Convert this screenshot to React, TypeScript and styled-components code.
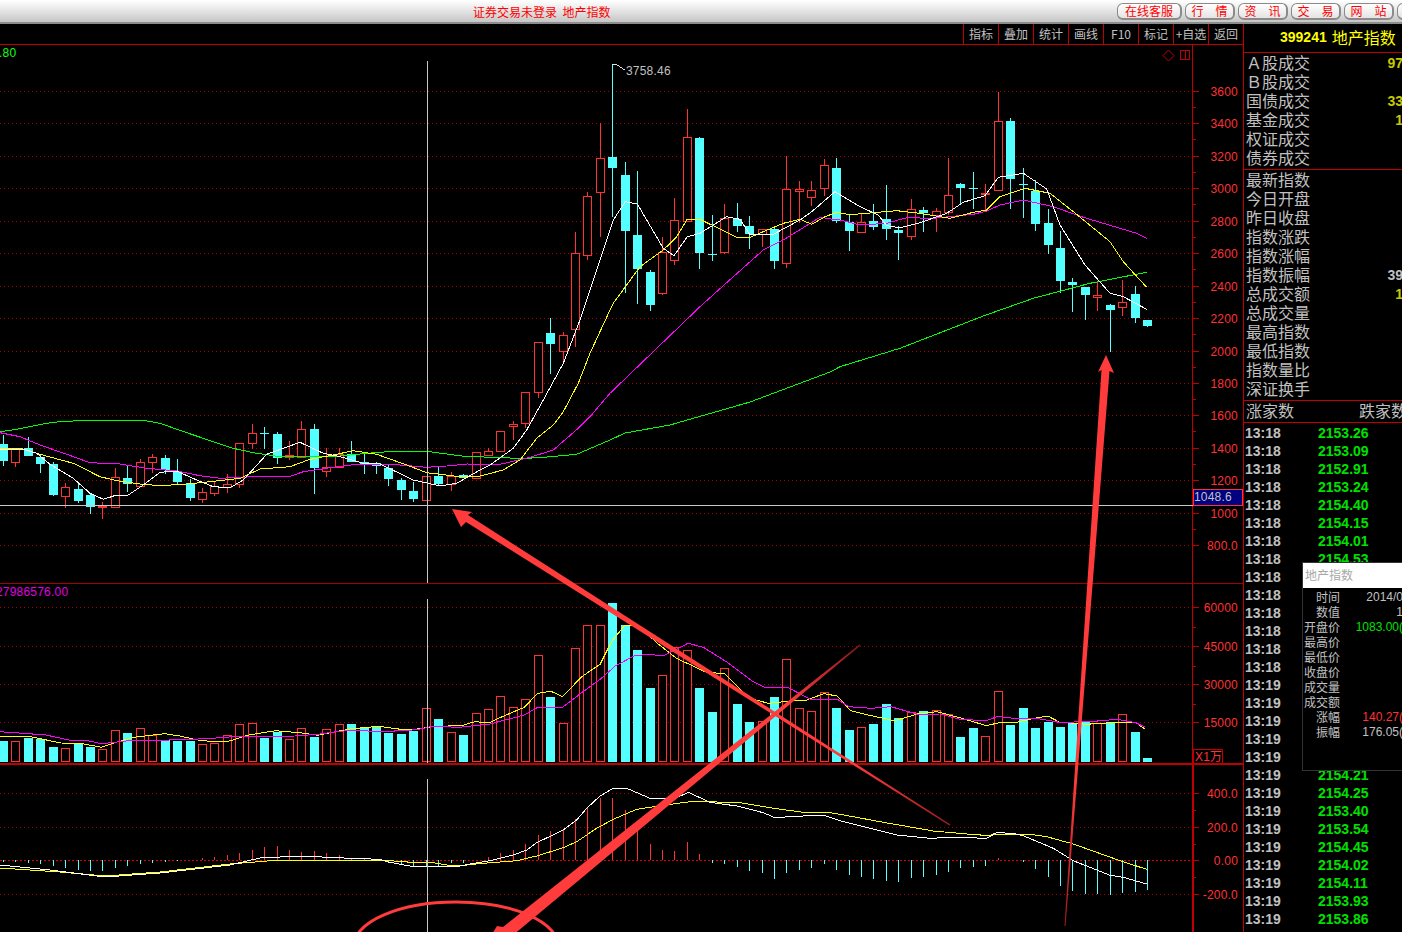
import React from 'react';
import styled, { createGlobalStyle } from 'styled-components';

const RED = '#ff3232';
const CYAN = '#54ffff';
const AXIS = '#c00000';
const ARROW = '#ff3b3b';
const SANS = '"Liberation Sans", "Noto Sans CJK SC", sans-serif';
const CJK = '"Noto Sans CJK SC", "Liberation Sans", sans-serif';

const GlobalStyle = createGlobalStyle`
  html, body {
    margin: 0;
    padding: 0;
    background: #000;
    overflow: hidden;
  }
`;

const Frame = styled.div`
  position: relative;
  width: 1402px;
  height: 932px;
  overflow: hidden;
  display: flex;
  flex-direction: column;
  background: #000;
`;

const TitleBar = styled.header`
  height: 22px;
  display: flex;
  align-items: center;
  padding-left: 473px;
  background: linear-gradient(#ffffff, #f2f2f2 25%, #c6c6c6);
  border-bottom: 2px solid #8c8c8c;
`;

const TitleText = styled.div`
  width: 644px;
  flex: none;
  font: 12px ${CJK};
  color: #ff0000;
  white-space: pre;
`;

const NavGroup = styled.nav`
  display: flex;
  gap: 3px;
  flex: none;
`;

const NavButton = styled.div`
  width: 65px;
  height: 17px;
  box-sizing: border-box;
  flex: none;
  display: flex;
  align-items: center;
  justify-content: center;
  border: 1px solid #8a8a8a;
  border-right-width: 2px;
  border-bottom-width: 2px;
  border-radius: 6px;
  background: linear-gradient(#ffffff, #e4e4e4);
  font: 12px ${CJK};
  color: #ff0000;
  white-space: pre;

  &:not(:first-child) {
    width: 50px;
  }
`;

const Workspace = styled.main`
  flex: 1;
  min-height: 0;
  display: flex;
`;

const ChartColumn = styled.section`
  width: 1243px;
  flex: none;
  display: flex;
  flex-direction: column;
`;

const Toolbar = styled.div`
  height: 20px;
  display: flex;
  justify-content: flex-end;
  border-bottom: 1px solid ${AXIS};
`;

const ToolCell = styled.div`
  width: 35px;
  box-sizing: border-box;
  padding-bottom: 2px;
  border-left: 1px solid ${AXIS};
  display: flex;
  align-items: center;
  justify-content: center;
  font: 12px ${CJK};
  color: #c0c0c0;
  white-space: nowrap;
`;

const ChartSvg = styled.svg`
  display: block;
  width: 1243px;
  flex: none;
`;

const AxisLabel = styled.text`
  font: 12px ${SANS};
  letter-spacing: 0.2px;
  fill: ${RED};
  text-anchor: end;
`;

const ChartNote = styled.text<{ $color: string }>`
  font: 12px ${SANS};
  letter-spacing: 0.2px;
  fill: ${(p) => p.$color};
`;

const SidePanel = styled.aside`
  position: relative;
  flex: 1;
  min-width: 0;
  overflow: hidden;
  border-left: 1px solid ${AXIS};
`;

const CodeHeader = styled.div`
  height: 29px;
  box-sizing: border-box;
  padding: 0 0 3px 36px;
  border-bottom: 1px solid ${AXIS};
  display: flex;
  align-items: center;
  gap: 5px;
  color: #ffff00;
`;

const CodeNumber = styled.span`
  font: bold 14px ${SANS};
`;

const CodeName = styled.span`
  font: 16px ${CJK};
`;

const StatGroup = styled.div`
  padding: 0 0 2px 2px;
  border-bottom: 1px solid ${AXIS};
`;

const StatRow = styled.div`
  height: 19px;
  display: flex;
  justify-content: space-between;
  align-items: center;
`;

const StatLabel = styled.span`
  font: 16px/19px ${CJK};
  color: #c0c0c0;
  white-space: nowrap;
`;

const StatValue = styled.span<{ $muted?: boolean }>`
  font: bold 14px ${SANS};
  color: ${(p) => (p.$muted ? '#c0c0c0' : '#c8c800')};
  margin-right: -1px;
`;

const BreadthRow = styled.div`
  height: 22px;
  box-sizing: border-box;
  display: flex;
  justify-content: space-between;
  align-items: center;
  padding: 0 0 2px 2px;
  margin-right: -5px;
  border-bottom: 1px solid ${AXIS};
`;

const TickList = styled.div`
  padding: 1px 0 0 1px;
`;

const TickRow = styled.div`
  height: 18px;
  display: flex;
  align-items: center;
  font: bold 14px ${SANS};
`;

const TickTime = styled.span`
  width: 73px;
  color: #c0c0c0;
`;

const TickPrice = styled.span`
  color: #00e000;
`;

const InfoCard = styled.div`
  position: absolute;
  top: 538px;
  left: 58px;
  width: 100px;
  height: 207px;
  background: #000;
  border: 1px solid #333;
  border-right: 0;
`;

const InfoTitle = styled.div`
  height: 25px;
  box-sizing: border-box;
  padding: 0 0 2px 2px;
  background: #fff;
  display: flex;
  align-items: center;
  font: 12px ${CJK};
  color: #a8a8a8;
  margin-bottom: 1px;
`;

const InfoRow = styled.div`
  height: 15px;
  display: flex;
  align-items: center;
  justify-content: space-between;
`;

const InfoLabel = styled.span`
  width: 37px;
  text-align: right;
  font: 12px ${CJK};
  color: #c0c0c0;
`;

const InfoValue = styled.span<{ $color?: string }>`
  font: 12px ${SANS};
  color: ${(p) => p.$color ?? '#c0c0c0'};
`;

const AnnotationLayer = styled.svg`
  position: absolute;
  inset: 0;
  width: 1402px;
  height: 932px;
  pointer-events: none;
`;

// [high, bodyTop, bodyBottom, low, red] in page pixels, read off the chart
const CANDLES: number[][] = [
  [435, 444, 461, 466, 0], [448, 448, 462, 467, 1], [437, 448, 456, 456, 0], [455, 457, 464, 473, 0],
  [462, 464, 495, 496, 0], [483, 487, 496, 508, 1], [484, 489, 501, 503, 0], [493, 495, 507, 514, 0],
  [502, 506, 507, 519, 1], [468, 477, 507, 508, 1], [466, 478, 484, 492, 0], [459, 462, 486, 486, 1],
  [454, 457, 462, 473, 1], [455, 458, 470, 474, 0], [459, 472, 482, 485, 0], [479, 483, 498, 501, 0],
  [488, 492, 499, 503, 1], [482, 486, 493, 496, 1], [474, 484, 487, 493, 1], [443, 443, 484, 488, 1],
  [424, 433, 443, 449, 1], [427, 433, 434, 449, 0], [432, 434, 458, 464, 0], [441, 455, 457, 460, 1],
  [421, 429, 457, 457, 1], [424, 429, 468, 494, 0], [448, 467, 471, 477, 1], [448, 454, 467, 467, 1],
  [441, 454, 462, 462, 0], [453, 462, 464, 474, 0], [462, 463, 466, 474, 0], [465, 468, 479, 486, 0],
  [478, 480, 490, 500, 0], [482, 491, 499, 502, 0], [476, 476, 500, 501, 1], [467, 476, 484, 486, 0],
  [472, 476, 484, 491, 1], [474, 475, 478, 478, 0], [452, 452, 478, 478, 1], [448, 451, 455, 455, 1],
  [431, 431, 451, 451, 1], [421, 424, 426, 440, 1], [392, 392, 423, 428, 1], [342, 342, 392, 398, 1],
  [318, 333, 344, 374, 0], [332, 335, 351, 364, 1], [232, 253, 329, 347, 1], [192, 196, 255, 260, 1],
  [123, 158, 192, 237, 1], [64, 157, 168, 217, 0], [162, 175, 231, 293, 0], [171, 235, 269, 304, 0],
  [270, 272, 305, 311, 0], [237, 252, 293, 295, 1], [198, 220, 260, 265, 1], [109, 137, 221, 221, 1],
  [137, 138, 253, 269, 0], [215, 254, 255, 261, 0], [204, 218, 252, 254, 1], [203, 219, 226, 232, 0],
  [216, 226, 234, 249, 0], [229, 229, 234, 247, 1], [228, 229, 261, 269, 0], [156, 189, 263, 268, 1],
  [181, 189, 191, 223, 1], [181, 190, 197, 206, 1], [159, 165, 188, 196, 1], [158, 168, 221, 223, 0],
  [215, 222, 231, 251, 0], [213, 222, 232, 233, 1], [204, 221, 227, 230, 0], [185, 219, 229, 240, 0],
  [226, 230, 233, 260, 0], [199, 209, 236, 240, 1], [207, 210, 213, 232, 0], [208, 211, 215, 232, 1],
  [158, 195, 212, 215, 1], [183, 184, 188, 204, 0], [172, 188, 189, 209, 0], [184, 193, 193, 210, 1],
  [92, 121, 190, 190, 1], [118, 121, 179, 209, 0], [168, 184, 185, 218, 0], [180, 191, 224, 231, 0],
  [209, 223, 245, 254, 0], [231, 248, 281, 293, 0], [278, 282, 285, 312, 0], [287, 287, 295, 320, 0],
  [282, 295, 297, 311, 1], [304, 305, 310, 352, 0], [280, 302, 307, 316, 1], [286, 294, 318, 323, 0],
  [320, 320, 326, 327, 0],
];

const VOLUME_TOPS = [
  741, 741, 738, 739, 747, 748, 743, 747, 749, 730, 733, 728, 735, 740, 741, 741, 744, 743, 735, 724,
  723, 738, 732, 739, 728, 737, 729, 724, 724, 727, 727, 733, 734, 731, 708, 719, 732, 735, 713, 709,
  696, 707, 699, 655, 697, 723, 648, 625, 625, 603, 625, 650, 688, 675, 647, 650, 688, 712, 668, 704,
  722, 721, 697, 659, 708, 711, 692, 708, 730, 727, 724, 704, 718, 712, 711, 710, 714, 737, 728, 736,
  691, 725, 708, 728, 722, 727, 723, 722, 723, 723, 714, 732, 758,
];

const MACD_TIPS = [
  862, 862, 863, 864, 866, 868, 870, 871, 871, 868, 866, 864, 863, 862, 861, 860, 858, 857, 855, 853,
  850, 847, 846, 850, 852, 851, 853, 855, 858, 858, 859, 863, 865, 867, 867, 866, 863, 863, 860, 857,
  853, 850, 844, 835, 831, 829, 819, 807, 798, 798, 810, 827, 844, 850, 851, 842, 854, 863, 864, 867,
  871, 873, 879, 873, 870, 868, 864, 870, 875, 877, 879, 881, 882, 878, 877, 875, 872, 868, 867, 866,
  858, 860, 862, 869, 877, 886, 891, 894, 894, 895, 893, 892, 890,
];

const barX = (i: number) => Math.round(3 + i * 12.435);

// line points were measured on magnified crops, so each run keeps its own origin
const fromCrop = (ox: number, oy: number, sx: number, raw: string) =>
  raw
    .split(' ')
    .map((p) => {
      const [x, y] = p.split(',').map(Number);
      return `${(ox + x / sx).toFixed(1)},${(oy + y / 3).toFixed(1)}`;
    })
    .join(' ');

const PRICE_LINES = [
  {
    color: '#00ff00',
    points: [
      fromCrop(0, 410, 3, '0,65 50,58 140,40 190,34 290,31 430,31 480,40 560,68 640,95 700,115 760,128 840,140 1000,140 1100,130 1180,124 1280,124 1400,140 1500,142'),
      fromCrop(490, 220, 3, '90,716 160,712 260,703 290,690 360,660'),
      '625,433 670,425 750,402 830,372',
      fromCrop(840, 80, 3, '0,860 180,805 430,708 580,655 750,610 920,577'),
    ],
  },
  {
    color: '#ff00ff',
    points: [
      fromCrop(0, 410, 3, '0,68 60,80 120,105 200,133 270,158 360,162 440,175 530,183 600,197 660,205 760,200 870,199 910,185 1000,172 1070,163 1200,165 1280,172 1340,168 1400,162 1500,163'),
      fromCrop(490, 220, 3, '120,712 190,690 270,620 300,590 360,520'),
      fromCrop(500, 60, 3, '600,740 700,650 790,570 850,540 960,472 1000,478'),
      fromCrop(840, 80, 3, '0,420 60,435 140,430 200,413 280,415 400,403 440,393 480,375 550,360 640,380 730,412 890,460 920,475'),
    ],
  },
  {
    color: '#ffff00',
    points: [
      fromCrop(0, 410, 3, '0,115 70,117 120,133 220,160 300,200 350,212 420,222 480,227 560,222 630,215 720,205 780,177 870,170 930,148 1000,135 1060,122 1130,133 1220,165 1280,188 1380,200 1440,198'),
      fromCrop(490, 220, 3, '40,750 90,720 140,655 190,615 220,575 265,490 300,400 360,270'),
      fromCrop(500, 60, 3, '340,730 420,620 490,570 530,530 560,480 600,478 710,532 750,532 850,490 900,478 935,493 975,470 1010,457'),
      fromCrop(840, 80, 3, '30,404 170,392 240,400 330,415 400,397 440,390 480,350 555,325 630,340 700,395 810,485 850,545 920,622'),
    ],
  },
  {
    color: '#ffffff',
    points: [
      fromCrop(0, 410, 3, '0,118 70,118 110,130 150,163 220,205 270,250 310,268 350,255 385,255 430,225 480,187 530,183 590,210 640,230 690,233 730,210 800,133 900,97 970,130 1020,140 1090,160 1140,162 1240,210 1320,228 1370,220 1440,180'),
      fromCrop(490, 220, 3, '0,735 70,685 110,630 160,540 220,430 270,300 300,210'),
      fromCrop(500, 60, 3, '340,480 376,425 412,432 490,565 522,587 562,530 600,520 680,470 720,478 750,525 820,523 900,480 935,455 1005,395'),
      fromCrop(840, 80, 3, '60,380 115,405 140,437 180,443 240,428 320,400 370,367 435,347 475,292 550,280 620,327 660,435 735,555 810,640 850,650 920,688'),
    ],
  },
];

const VOLUME_LINES = [
  {
    color: '#ffff00',
    points: [
      fromCrop(0, 580, 2.613, '0,468 50,470 80,470 130,482 160,489 210,490 265,502 300,488 350,472 400,465 430,461 470,468 520,481 560,485 600,483 650,465 720,452 790,459 830,466 890,452 920,446 990,439 1060,450 1090,447 1130,440 1210,436 1240,425 1280,428 1300,416 1370,382 1405,340 1440,334 1470,350 1520,290 1568,253'),
      fromCrop(600, 590, 2.613, '30,155 65,105 100,107 150,160 200,205 280,248 325,250 390,325 440,340 490,334 540,330 585,311 620,318 655,362 700,375 770,392 830,372 880,365 940,383 1010,407 1050,396 1080,399 1130,386 1170,378 1200,396 1270,403 1350,397 1400,398 1425,418'),
    ],
  },
  {
    color: '#ff00ff',
    points: [
      fromCrop(0, 580, 2.613, '0,455 60,460 120,465 180,480 230,482 265,491 330,483 420,481 540,476 610,470 680,470 770,468 830,463 880,455 920,451 1000,455 1090,449 1130,439 1200,442 1280,432 1370,405 1405,382 1470,382 1520,338 1568,298'),
      fromCrop(600, 590, 2.613, '40,228 90,197 130,193 165,198 230,160 270,172 330,215 400,275 430,292 490,292 550,328 620,328 650,350 710,355 760,350 830,373 890,372 940,388 1010,392 1040,379 1080,385 1140,385 1200,397 1280,395 1350,388 1400,398 1425,412'),
    ],
  },
];

const MACD_LINES = [
  {
    color: '#ffff00',
    points: [
      '0,868 60,872 105,876 160,872 230,864 280,860',
      fromCrop(350, 770, 3, '0,270 120,272 200,278 250,278 290,285 350,285 400,280 500,272 560,258 640,233 680,215 740,175 790,148 860,118 930,107 1030,94 1170,98 1270,115 1370,128 1440,128'),
      fromCrop(840, 770, 3, '0,133 130,157 280,183 380,192 450,197 460,192 570,193 620,200 700,222 840,272 920,298'),
    ],
  },
  {
    color: '#ffffff',
    points: [
      '0,865 50,870 105,877 160,873 230,865 260,858 300,856',
      fromCrop(350, 770, 3, '0,265 90,268 110,275 190,290 250,290 320,290 360,282 420,272 490,255 530,240 560,218 640,180 680,150 710,115 750,78 790,55 830,55 900,85 970,88 1015,67 1080,97 1160,108 1240,128 1275,143 1320,140 1420,135'),
      fromCrop(840, 770, 3, '0,152 90,175 170,195 270,205 345,202 440,205 470,188 520,190 550,197 640,235 700,272 810,316 850,322 920,342'),
    ],
  },
];

const TICK_ROWS: [string, string][] = [
  ['13:18', '2153.26'], ['13:18', '2153.09'], ['13:18', '2152.91'], ['13:18', '2153.24'],
  ['13:18', '2154.40'], ['13:18', '2154.15'], ['13:18', '2154.01'], ['13:18', '2154.53'],
  ['13:18', ''], ['13:18', ''], ['13:18', ''], ['13:18', ''], ['13:18', ''], ['13:18', ''],
  ['13:19', ''], ['13:19', ''], ['13:19', ''], ['13:19', ''], ['13:19', ''],
  ['13:19', '2154.21'], ['13:19', '2154.25'], ['13:19', '2153.40'], ['13:19', '2153.54'],
  ['13:19', '2154.45'], ['13:19', '2154.02'], ['13:19', '2154.11'], ['13:19', '2153.93'], ['13:19', '2153.86'],
];

const INFO_ROWS: { label: string; value: string; color?: string }[] = [
  { label: '时间', value: '2014/0' },
  { label: '数值', value: '1' },
  { label: '开盘价', value: '1083.00(', color: '#00e000' },
  { label: '最高价', value: '' },
  { label: '最低价', value: '' },
  { label: '收盘价', value: '' },
  { label: '成交量', value: '' },
  { label: '成交额', value: '' },
  { label: '涨幅', value: '140.27(', color: RED },
  { label: '振幅', value: '176.05(' },
];

const NAV_ITEMS = ['在线客服', '行　情', '资　讯', '交　易', '网　站', ''];
const TOOLS = ['指标', '叠加', '统计', '画线', 'F10', '标记', '+自选', '返回'];

const STATS_A: [string, string?][] = [
  ['Ａ股成交', '97'], ['Ｂ股成交'], ['国债成交', '33'], ['基金成交', '1'], ['权证成交'], ['债券成交'],
];
const STATS_B: [string, string?, boolean?][] = [
  ['最新指数'], ['今日开盘'], ['昨日收盘'], ['指数涨跌'], ['指数涨幅'], ['指数振幅', '39', true],
  ['总成交额', '1'], ['总成交量'], ['最高指数'], ['最低指数'], ['指数量比'], ['深证换手'],
];

function Scale({ ticks }: { ticks: [number, string][] }) {
  const step = ticks[1][0] - ticks[0][0];
  return (
    <>
      {ticks.map(([y, label], i) => (
        <g key={label}>
          <line
            x1="0"
            x2="1193"
            y1={y + 0.5}
            y2={y + 0.5}
            stroke={label === '0.00' ? '#e00000' : '#a80000'}
            strokeDasharray={label === '0.00' ? '2 2' : '1 3'}
            shapeRendering="geometricPrecision"
          />
          <line x1="1193" x2="1199" y1={y + 0.5} y2={y + 0.5} stroke={AXIS} />
          {i < ticks.length - 1 && (
            <line x1="1193" x2="1196" y1={Math.round(y + step / 2) + 0.5} y2={Math.round(y + step / 2) + 0.5} stroke={AXIS} />
          )}
          <AxisLabel x="1238" y={y + 5}>{label}</AxisLabel>
        </g>
      ))}
    </>
  );
}

function Lines({ lines }: { lines: { color: string; points: string[] }[] }) {
  return (
    <>
      {lines.map((l) => (
        <polyline key={l.color} points={l.points.join(' ')} fill="none" stroke={l.color} strokeWidth="1" />
      ))}
    </>
  );
}

function Candle({ index, data }: { index: number; data: number[] }) {
  const [high, top, bottom, low, red] = data;
  const x = barX(index);
  const color = red ? RED : CYAN;
  if (red) {
    return (
      <g stroke={color}>
        <line x1={x + 0.5} x2={x + 0.5} y1={high} y2={top} />
        <line x1={x + 0.5} x2={x + 0.5} y1={bottom} y2={low} />
        <rect x={x - 3.5} y={top + 0.5} width="8" height={Math.max(bottom - top, 1)} fill="#000" />
      </g>
    );
  }
  return (
    <g>
      <line x1={x + 0.5} x2={x + 0.5} y1={high} y2={low} stroke={color} />
      <rect x={x - 4} y={top} width="9" height={Math.max(bottom - top, 1)} fill={color} />
    </g>
  );
}

function PricePane() {
  const ticks: [number, string][] = [
    [91, '3600'], [123, '3400'], [156, '3200'], [188, '3000'], [221, '2800'], [253, '2600'], [286, '2400'], [318, '2200'],
    [351, '2000'], [383, '1800'], [415, '1600'], [448, '1400'], [480, '1200'], [513, '1000'], [545, '800.0'],
  ];
  return (
    <ChartSvg viewBox="0 45 1243 539" height="539" shapeRendering="crispEdges">
      <Scale ticks={ticks} />
      {CANDLES.map((c, i) => (
        <Candle key={i} index={i} data={c} />
      ))}
      <Lines lines={PRICE_LINES} />
      <line x1="1192.5" x2="1192.5" y1="45" y2="584" stroke={AXIS} />
      <line x1="0" x2="1243" y1="583.5" y2="583.5" stroke="#a00000" />
      <ChartNote $color="#10ff10" x="-1" y="57">.80</ChartNote>
      <polyline points="612,65 616,64 620,67 625,70" fill="none" stroke="#e0e0e0" />
      <ChartNote $color="#c0c0c0" x="626" y="75">3758.46</ChartNote>
      <path d="M1168.5 50 L1174 55.5 L1168.5 61 L1163 55.5 Z" fill="none" stroke={AXIS} shapeRendering="auto" />
      <rect x="1180.5" y="50.5" width="9" height="9" fill="none" stroke={AXIS} />
      <line x1="1185.5" x2="1185.5" y1="50" y2="60" stroke={AXIS} />
      <line x1="427.5" x2="427.5" y1="61" y2="583" stroke="#c8c8c8" />
      <line x1="0" x2="1193" y1="505.5" y2="505.5" stroke="#c8c8c8" />
      <rect x="1193.5" y="489.5" width="49" height="16" fill="#000080" stroke={RED} />
      <ChartNote $color="#c0c0c0" x="1194" y="501">1048.6</ChartNote>
    </ChartSvg>
  );
}

function VolumePane() {
  const ticks: [number, string][] = [[607, '60000'], [646, '45000'], [684, '30000'], [722, '15000']];
  return (
    <ChartSvg viewBox="0 584 1243 180" height="180" shapeRendering="crispEdges">
      <Scale ticks={ticks} />
      {VOLUME_TOPS.map((top, i) => {
        const x = barX(i);
        return CANDLES[i][4] ? (
          <rect key={i} x={x - 3.5} y={top + 0.5} width="8" height={761 - top} fill="#000" stroke={RED} />
        ) : (
          <rect key={i} x={x - 4} y={top} width="9" height={762 - top} fill={CYAN} />
        );
      })}
      <Lines lines={VOLUME_LINES} />
      <ChartNote $color="#e000e0" x="-4" y="596">27986576.00</ChartNote>
      <line x1="1192.5" x2="1192.5" y1="584" y2="764" stroke={AXIS} />
      <line x1="427.5" x2="427.5" y1="599" y2="763" stroke="#c8c8c8" />
      <rect x="1193.5" y="749.5" width="29" height="14" fill="#000" stroke={AXIS} />
      <ChartNote $color={RED} x="1195" y="761">X1万</ChartNote>
      <line x1="0" x2="1243" y1="763.5" y2="763.5" stroke={AXIS} />
    </ChartSvg>
  );
}

function MacdPane() {
  const ticks: [number, string][] = [[793, '400.0'], [827, '200.0'], [860, '0.00'], [894, '-200.0']];
  return (
    <ChartSvg viewBox="0 764 1243 168" height="168" shapeRendering="crispEdges">
      <Scale ticks={ticks} />
      {MACD_TIPS.map((tip, i) => (
        <line key={i} x1={barX(i) + 0.5} x2={barX(i) + 0.5} y1={tip} y2="860" stroke={tip < 860 ? RED : CYAN} />
      ))}
      <Lines lines={MACD_LINES} />
      <line x1="1193" x2="1193" y1="764" y2="932" stroke={AXIS} strokeWidth="2" />
      <line x1="0" x2="1243" y1="764" y2="764" stroke={AXIS} strokeWidth="2" />
      <line x1="427.5" x2="427.5" y1="779" y2="932" stroke="#c8c8c8" />
    </ChartSvg>
  );
}

function Annotations() {
  return (
    <AnnotationLayer viewBox="0 0 1402 932">
      <defs>
        <linearGradient id="fadeA" gradientUnits="userSpaceOnUse" x1="452" y1="509" x2="950" y2="825">
          <stop offset="0.8" stopColor={ARROW} />
          <stop offset="1" stopColor="#a01c1c" />
        </linearGradient>
        <linearGradient id="fadeB" gradientUnits="userSpaceOnUse" x1="497" y1="932" x2="860" y2="645">
          <stop offset="0.8" stopColor={ARROW} />
          <stop offset="1" stopColor="#7e1818" />
        </linearGradient>
        <linearGradient id="fadeC" gradientUnits="userSpaceOnUse" x1="1106" y1="355" x2="1065" y2="926">
          <stop offset="0.75" stopColor={ARROW} />
          <stop offset="1" stopColor="#a01c1c" />
        </linearGradient>
      </defs>
      <ellipse cx="456" cy="946" rx="102" ry="44" fill="none" stroke={ARROW} strokeWidth="3" />
      <polygon points="452,509 472,512 468,515 950.5,824.5 949.5,825.5 466,522 461,527" fill="url(#fadeA)" />
      <polygon points="482,950 497,926 503,927 859.5,644.5 860.5,645.5 512,936 514,943" fill="url(#fadeB)" />
      <polygon points="1106,355 1114,373 1109.5,371 1065.5,926 1064.5,926 1101.5,370 1098,372" fill="url(#fadeC)" />
    </AnnotationLayer>
  );
}

export default function App() {
  return (
    <Frame>
      <GlobalStyle />
      <TitleBar>
        <TitleText>证券交易未登录  地产指数</TitleText>
        <NavGroup>
          {NAV_ITEMS.map((item) => (
            <NavButton key={item}>{item}</NavButton>
          ))}
        </NavGroup>
      </TitleBar>
      <Workspace>
        <ChartColumn>
          <Toolbar>
            {TOOLS.map((tool) => (
              <ToolCell key={tool}>{tool}</ToolCell>
            ))}
          </Toolbar>
          <PricePane />
          <VolumePane />
          <MacdPane />
        </ChartColumn>
        <SidePanel>
          <CodeHeader>
            <CodeNumber>399241</CodeNumber>
            <CodeName>地产指数</CodeName>
          </CodeHeader>
          <StatGroup>
            {STATS_A.map(([label, value]) => (
              <StatRow key={label}>
                <StatLabel>{label}</StatLabel>
                {value && <StatValue>{value}</StatValue>}
              </StatRow>
            ))}
          </StatGroup>
          <StatGroup>
            {STATS_B.map(([label, value, muted]) => (
              <StatRow key={label}>
                <StatLabel>{label}</StatLabel>
                {value && <StatValue $muted={muted}>{value}</StatValue>}
              </StatRow>
            ))}
          </StatGroup>
          <BreadthRow>
            <StatLabel>涨家数</StatLabel>
            <StatLabel>跌家数</StatLabel>
          </BreadthRow>
          <TickList>
            {TICK_ROWS.map(([time, price], i) => (
              <TickRow key={i}>
                <TickTime>{time}</TickTime>
                <TickPrice>{price}</TickPrice>
              </TickRow>
            ))}
          </TickList>
          <InfoCard>
            <InfoTitle>地产指数</InfoTitle>
            {INFO_ROWS.map((row) => (
              <InfoRow key={row.label}>
                <InfoLabel>{row.label}</InfoLabel>
                <InfoValue $color={row.color}>{row.value}</InfoValue>
              </InfoRow>
            ))}
          </InfoCard>
        </SidePanel>
      </Workspace>
      <Annotations />
    </Frame>
  );
}
